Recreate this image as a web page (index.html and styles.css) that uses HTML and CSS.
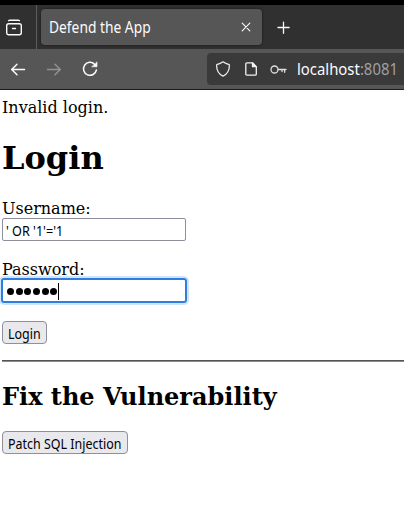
FILE: index.html
```html
<!DOCTYPE html>
<html lang="en">
<head>
<meta charset="utf-8">
<title>Defend the App</title>
<link rel="stylesheet" href="styles.css">
</head>
<body>
<header class="browser">
  <div class="tabbar">
    <div class="recent">
      <svg width="18" height="18" viewBox="0 0 18 18" fill="none" stroke="#fbfbfe" stroke-width="1.4" stroke-linecap="round"><path d="M3.7 1.7Q4 1.2 5 1.2h8Q14 1.2 14.3 1.7"/><rect x="1.7" y="4.7" width="14.6" height="11.1" rx="2"/><path d="M7.5 9.5h3"/></svg>
    </div>
    <div class="tab">
      <span class="tab-title">Defend the App</span>
      <svg width="10" height="10" viewBox="0 0 10 10" fill="none" stroke="#fbfbfe" stroke-width="1.1" stroke-linecap="round"><path d="M1.2 1.2l7.6 7.6M8.8 1.2l-7.6 7.6"/></svg>
    </div>
    <svg class="plus" width="14" height="14" viewBox="0 0 14 14" fill="none" stroke="#fbfbfe" stroke-width="1.3" stroke-linecap="round"><path d="M6.5 1.2v11.1M1 6.5h11.1"/></svg>
  </div>
  <div class="toolbar">
    <svg class="nav" width="16" height="14" viewBox="0 0 16 14" fill="none" stroke="#fbfbfe" stroke-width="1.5" stroke-linecap="round" stroke-linejoin="round"><path d="M14.5 7.5H1.7M7 2.2L1.7 7.5 7 12.8"/></svg>
    <svg class="nav dim" width="16" height="14" viewBox="0 0 16 14" fill="none" stroke="#929292" stroke-width="1.5" stroke-linecap="round" stroke-linejoin="round"><path d="M1.5 7.5h12.8M9 2.2l5.3 5.3L9 12.8"/></svg>
    <svg class="reload" width="16" height="16" viewBox="0 0 16 16" fill="none" stroke="#fbfbfe" stroke-width="1.5" stroke-linecap="round"><path d="M12.6 3.2A6.5 6.5 0 1 0 14.4 9"/><path d="M15 1.2v4.6h-5z" fill="#fbfbfe" stroke-width=".6"/></svg>
    <div class="urlbar">
      <svg class="shield" width="16" height="16" viewBox="0 0 16 16" fill="none" stroke="#e8e8e8" stroke-width="1.3" stroke-linejoin="round"><path d="M8 .8Q10.5 2.6 14.3 3.7C14.7 8.7 12.5 13 8 15.2C3.5 13 1.3 8.7 1.7 3.7Q5.5 2.6 8 .8z"/></svg>
      <svg class="doc" width="12" height="14" viewBox="0 0 12 14" fill="none" stroke="#f2f2f2" stroke-width="1.3" stroke-linejoin="round"><path d="M2 .8h5.5L11.3 4.6V12q0 1.2-1.2 1.2H2Q.8 13.2.8 12V2Q.8.8 2 .8z"/><path d="M7.5 1v3.7h3.6z" fill="#f2f2f2"/></svg>
      <svg class="key" width="17" height="9" viewBox="0 0 17 9" fill="none" stroke="#dedede" stroke-width="1.3" stroke-linecap="round"><circle cx="4.5" cy="4.5" r="3.5"/><path d="M8.3 4.5h7.7M12 4.5v2M14.6 4.5v2.8"/></svg>
      <span class="url">localhost<span class="port">:8081</span></span>
    </div>
  </div>
</header>
<main class="page">
  <p class="notice">Invalid login.</p>
  <h1>Login</h1>
  <div class="label">Username:</div>
  <div class="field"><span class="value">' OR '1'='1</span></div>
  <div class="label second">Password:</div>
  <div class="field focused"><i class="dot"></i><i class="dot"></i><i class="dot"></i><i class="dot"></i><i class="dot"></i><i class="dot"></i><i class="caret"></i></div>
  <button class="button login"><span class="caption">Login</span></button>
  <hr>
  <h2>Fix the Vulnerability</h2>
  <button class="button patch"><span class="caption">Patch SQL Injection</span></button>
</main>
</body>
</html>
```
FILE: styles.css
```css
* { box-sizing: border-box; }
body { margin: 0; background: #fff; color: #000; font: 16px/19px "DejaVu Serif", serif; overflow: hidden; }
svg { display: block; flex: none; }

.browser { border-top: 5px solid #000; border-bottom: 1px solid #1c1b1c; height: 90px; font-family: "Noto Sans", sans-serif; color: #fbfbfe; }
.tabbar { display: flex; height: 44px; background: #303030; }
.recent { width: 37px; padding: 14px 0 0 5px; border-right: 1px solid #5c5c5c; }
.tab { display: flex; align-items: center; justify-content: space-between; width: 221px; height: 36px; margin: 4px 0 0 4px; padding: 0 11px 0 8px; border-radius: 4px; background: #565656; box-shadow: 0 0 3px rgba(0, 0, 0, .55); }
.tab-title { font-size: 15.5px; white-space: nowrap; transform: scaleX(.89); transform-origin: left; }
.plus { margin: 16px 0 0 15px; }

.toolbar { display: flex; align-items: center; height: 40px; padding-left: 10px; background: #565656; }
.nav { margin-right: 20px; }
.reload { margin-right: 109px; }
.urlbar { display: flex; align-items: center; flex: 1; height: 32px; padding-left: 8px; border-radius: 4px 0 0 4px; background: #3a3a3a; }
.doc { margin-left: 14px; }
.key { margin-left: 13px; }
.url { margin-left: 10px; font-size: 15.5px; white-space: nowrap; transform: scaleX(.96); transform-origin: left; }
.port { color: #a0a0a0; }

.page { padding: 8px 0 0 2px; }
.notice { margin: 0; }
h1 { margin: 21px 0; font-size: 32px; line-height: 40px; }
.label { height: 19px; }
.second { margin-top: 19px; }
.field { width: 184px; height: 23px; padding-left: 3px; border: 1px solid #8f8f9d; border-radius: 2px; font: 14px/23px "Noto Sans", sans-serif; white-space: nowrap; }
.value { display: inline-block; transform: scaleX(.9); transform-origin: left; }
.focused { display: flex; align-items: center; width: 186px; height: 25px; margin: -1px 0 0 -1px; padding: 1px 0 0 4px; border: 2px solid #2f7de1; border-radius: 3px; box-shadow: 0 0 0 2px #cfe5fb; }
.dot { width: 7px; height: 7px; margin-right: 1.7px; border-radius: 50%; background: #000; }
.caret { width: 1px; height: 17px; margin-left: -1px; background: #000; }
.button { display: flex; justify-content: center; height: 23px; padding: 1px 0 0; border: 1px solid #8f8f9d; border-radius: 4px; background: #e9e9ed; color: #000; font: 14px/22px "Noto Sans", sans-serif; white-space: nowrap; }
.caption { transform: scaleX(.89); }
.login { width: 45px; margin-top: 18px; }
hr { height: 2px; margin: 16px 0 0; border: 0; border-top: 1px solid #555; background: #8a8a8a; }
h2 { margin: 20px 0; font-size: 24px; line-height: 29px; }
.patch { width: 126px; }
```
